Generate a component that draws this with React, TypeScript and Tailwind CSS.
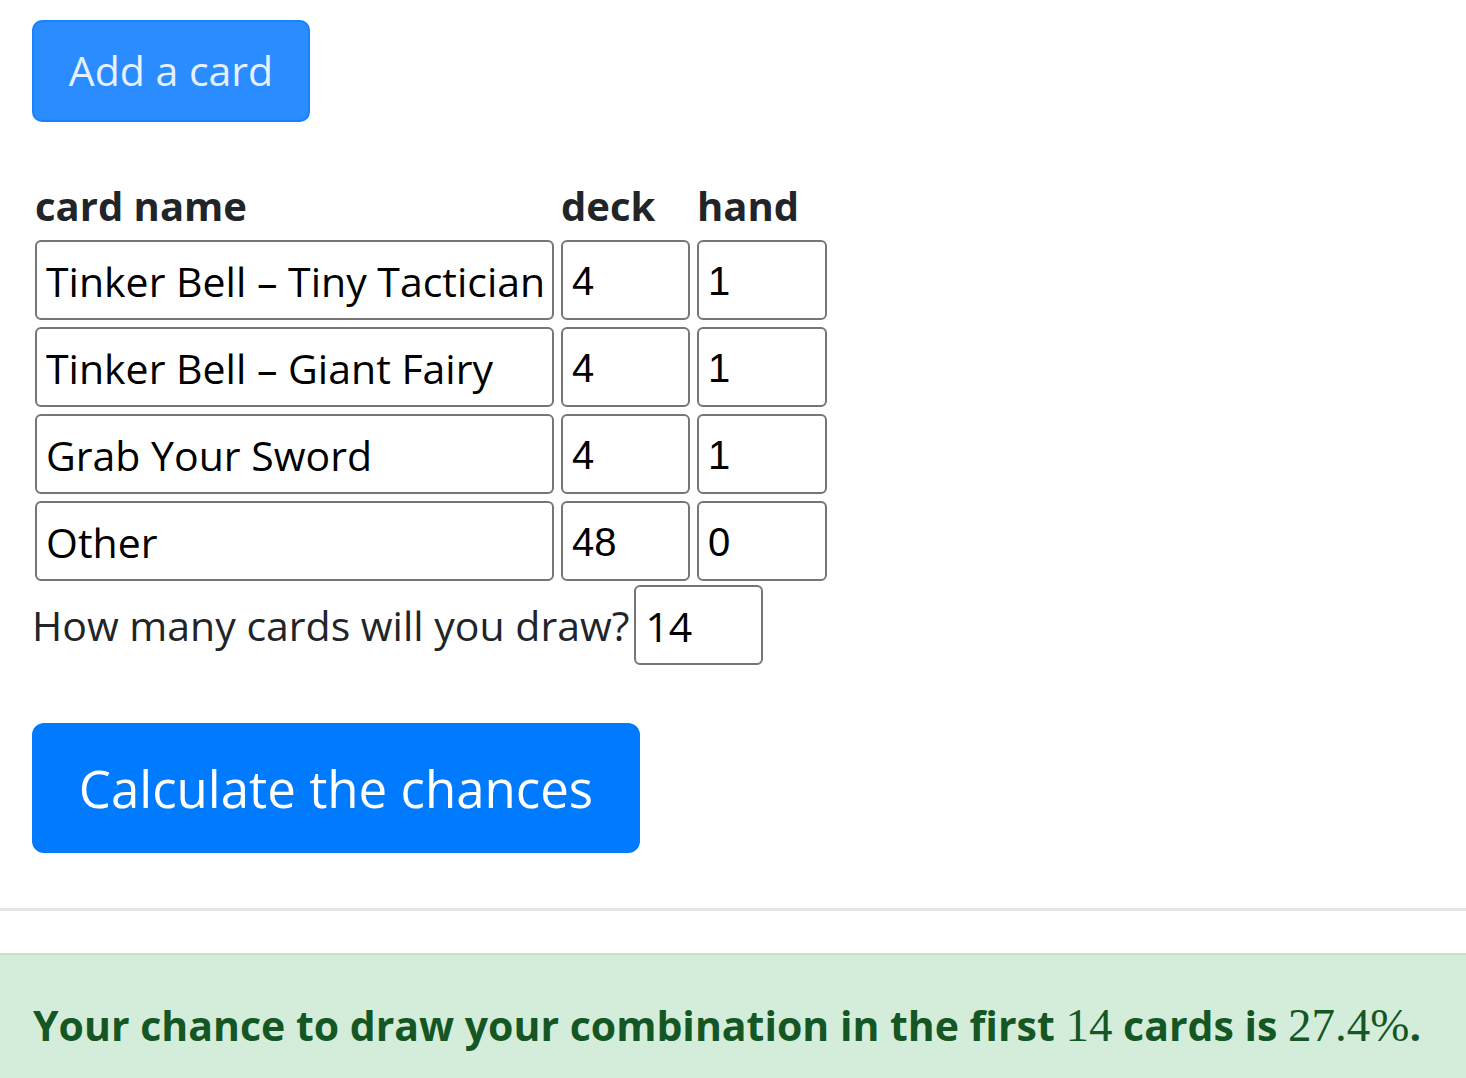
import React from 'react';

const SANS = "font-['Open_Sans',sans-serif]";

interface CardRow {
  name: string;
  deck: string;
  hand: string;
}

const rows: CardRow[] = [
  { name: 'Tinker Bell – Tiny Tactician', deck: '4', hand: '1' },
  { name: 'Tinker Bell – Giant Fairy', deck: '4', hand: '1' },
  { name: 'Grab Your Sword', deck: '4', hand: '1' },
  { name: 'Other', deck: '48', hand: '0' },
];

function Field({ value, mono = false, width }: { value: string; mono?: boolean; width: string }) {
  return (
    <input
      readOnly
      type="text"
      value={value}
      className={`${width} h-[80px] rounded-[6px] border-2 border-[#767676] bg-white px-[9px] pt-[2px] text-black outline-none ${
        mono ? "font-['Liberation_Sans',Arial,sans-serif] text-[40px]" : `${SANS} text-[41px]`
      }`}
    />
  );
}

export default function App() {
  return (
    <div className={`min-h-screen bg-white text-[#212529] ${SANS}`}>
      <div className="pl-[32px] pt-[20px]">
        {/* Add button */}
        <button className="flex h-[102px] w-[278px] items-center justify-center rounded-[10px] border-2 border-[#1682ff] bg-[#2a8cff] text-[41px] text-[#e6f0ff]">
          Add a card
        </button>

        {/* Cards table */}
        <div className="mt-[60px] pl-[3px]">
          <div className="grid grid-cols-[519px_129px_130px] gap-x-[7px]">
            <div className="h-[58px] text-[40px] font-bold leading-[48px]">card name</div>
            <div className="h-[58px] text-[40px] font-bold leading-[48px]">deck</div>
            <div className="h-[58px] text-[40px] font-bold leading-[48px]">hand</div>
          </div>
          <div className="flex flex-col gap-[7px]">
            {rows.map((row) => (
              <div key={row.name} className="flex gap-[7px]">
                <Field value={row.name} width="w-[519px]" />
                <Field value={row.deck} mono width="w-[129px]" />
                <Field value={row.hand} mono width="w-[130px]" />
              </div>
            ))}
          </div>
        </div>

        {/* Draw count */}
        <div className="mt-[4px] flex items-center">
          <span className="text-[41px] leading-[80px]">How many cards will you draw?</span>
          <input
            readOnly
            type="text"
            value="14"
            className={`ml-[5px] h-[80px] w-[129px] rounded-[6px] border-2 border-[#767676] bg-white px-[9px] pt-[2px] text-[41px] text-black outline-none ${SANS}`}
          />
        </div>

        <button className="mt-[58px] flex h-[130px] w-[608px] items-center justify-center rounded-[12px] bg-[#007bff] text-[51px] text-white">
          Calculate the chances
        </button>
      </div>

      <hr className="mt-[55px] border-t-[3px] border-[#e5e5e5]" />

      {/* Result */}
      <div className="mt-[42px] border-t-2 border-[#c3e6cb] bg-[#d4edda] pb-[30px] pl-[33px] pt-[40px]">
        <p className="text-[41px] font-bold leading-[60px] text-[#155724]">
          Your chance to draw your combination in the first{' '}
          <span className="font-['Liberation_Serif',serif] text-[47px] font-normal">14</span> cards is{' '}
          <span className="font-['Liberation_Serif',serif] text-[47px] font-normal">27.4%</span>.
        </p>
      </div>
    </div>
  );
}
